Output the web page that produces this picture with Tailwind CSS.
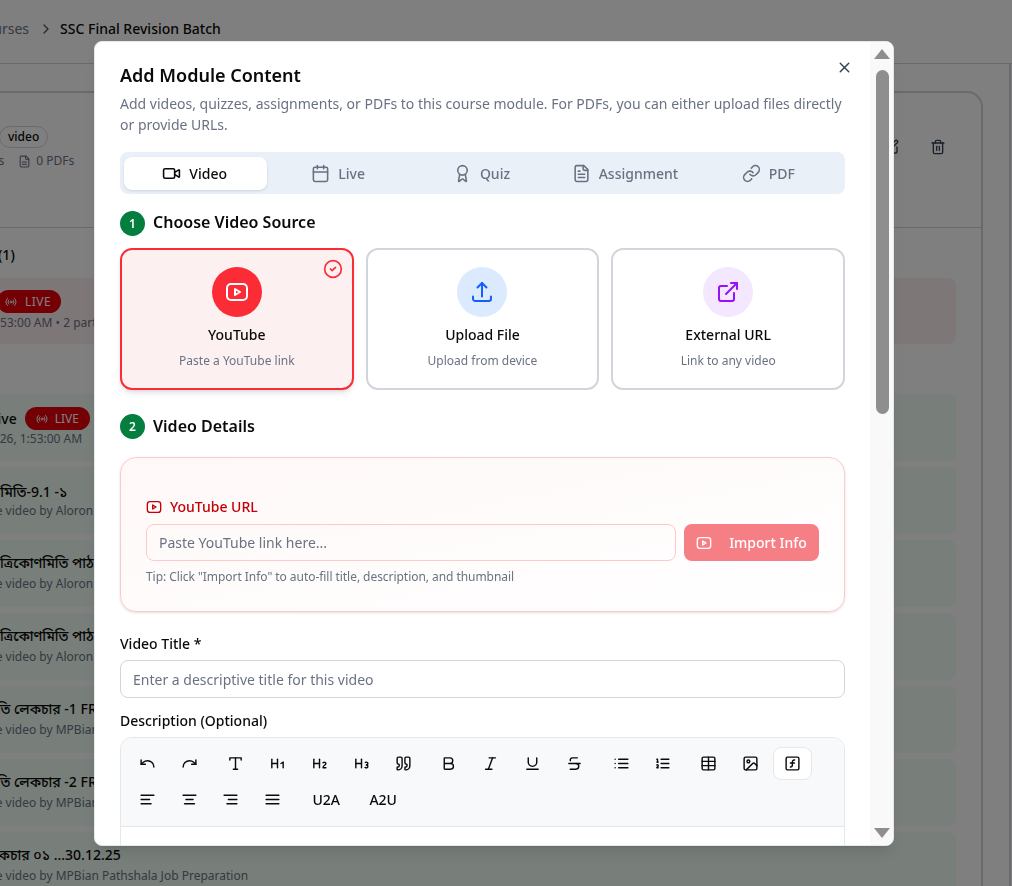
<!DOCTYPE html>
<html lang="en">
<head>
  <meta charset="UTF-8" />
  <title>Add Module Content</title>
  <script src="https://cdn.jsdelivr.net/npm/@tailwindcss/browser@4"></script>
</head>
<body class="font-['Noto_Sans','Noto_Sans_Bengali',sans-serif] bg-white text-[#0a0a0a] overflow-hidden">
  <!-- page behind the dialog -->
  <div class="w-[1012px] h-[886px] overflow-hidden">
    <div class="h-[64px] border-b border-gray-300 flex items-center -ml-[24px] pb-[6px] text-sm">
      <span class="text-gray-500">Courses</span>
      <svg class="w-4 h-4 ml-[9px] mr-[6px] text-gray-600" viewBox="0 0 24 24" fill="none" stroke="currentColor" stroke-width="2" stroke-linecap="round" stroke-linejoin="round"><path d="m9 18 6-6-6-6"/></svg>
      <span class="font-medium">SSC Final Revision Batch</span>
    </div>
    <div class="w-[1011px] border-r-2 border-gray-300 h-[822px] pt-[27px] overflow-hidden">
      <div class="-ml-[40px] w-[1023px] border-2 border-gray-300 rounded-2xl h-[900px]">
        <div class="h-[135px] border-b border-gray-300 pt-[33px] relative">
          <span class="flex w-fit items-center h-[22px] ml-[37px] border border-gray-300 rounded-full px-[8px] text-xs font-medium">video</span>
          <div class="flex items-center mt-[5px] -ml-[4px] text-xs text-gray-500 whitespace-nowrap">
            <span>2 videos</span>
            <svg class="w-[13px] h-[13px] ml-[14px] mr-[5px]" viewBox="0 0 24 24" fill="none" stroke="currentColor" stroke-width="2" stroke-linecap="round" stroke-linejoin="round"><path d="M15 2H6a2 2 0 0 0-2 2v16a2 2 0 0 0 2 2h12a2 2 0 0 0 2-2V7Z"/><path d="M14 2v4a2 2 0 0 0 2 2h4"/><path d="M16 13H8"/><path d="M16 17H8"/></svg>
            <span>0 PDFs</span>
          </div>
          <svg class="absolute left-[921px] top-[46px] w-4 h-4 text-gray-700" viewBox="0 0 24 24" fill="none" stroke="currentColor" stroke-width="2" stroke-linecap="round" stroke-linejoin="round"><path d="M12 3H5a2 2 0 0 0-2 2v14a2 2 0 0 0 2 2h14a2 2 0 0 0 2-2v-7"/><path d="M18.375 2.625a1 1 0 0 1 3 3l-9.013 9.014a2 2 0 0 1-.853.505l-2.873.84a.5.5 0 0 1-.62-.62l.84-2.873a2 2 0 0 1 .506-.852z"/></svg>
          <svg class="absolute left-[968px] top-[46px] w-4 h-4 text-gray-700" viewBox="0 0 24 24" fill="none" stroke="currentColor" stroke-width="2" stroke-linecap="round" stroke-linejoin="round"><path d="M3 6h18"/><path d="M19 6v14a2 2 0 0 1-2 2H7a2 2 0 0 1-2-2V6"/><path d="M8 6V4a2 2 0 0 1 2-2h4a2 2 0 0 1 2 2v2"/><path d="M10 11v6"/><path d="M14 11v6"/></svg>
        </div>
        <div class="pl-[10px] pr-[25px] pt-[17px] whitespace-nowrap">
          <p class="text-sm font-medium h-[33px] ml-[26px]">(1)</p>
          <div class="h-[66px] bg-[#fdeeee] rounded-lg pt-[12px] pl-[28px] text-xs text-gray-500">
            <span class="inline-flex items-center gap-[8px] bg-[#e7000b] text-white rounded-full h-[23px] pl-[8px] pr-[10px] -ml-[3px]">
              <svg class="w-3 h-3" viewBox="0 0 24 24" fill="none" stroke="currentColor" stroke-width="2" stroke-linecap="round" stroke-linejoin="round"><path d="M4.900 19.100C1 15.200 1 8.800 4.900 4.900"/><path d="M7.800 16.200c-2.300-2.300-2.300-6.100 0-8.500"/><circle cx="12" cy="12" r="2"/><path d="M16.200 7.800c2.300 2.300 2.300 6.100 0 8.500"/><path d="M19.100 4.900C23 8.800 23 15.100 19.100 19"/></svg>
              <span class="tracking-[0.5px]">LIVE</span>
            </span>
            <p class="mt-[2px] -ml-[10px]">1:53:00 AM • 2 parts</p>
          </div>
          <div class="mt-[50px] flex flex-col gap-[6px]">
            <div class="h-[67px] bg-[#f0fdf4] rounded-lg pt-[13px] pl-[28px] overflow-hidden">
              <div class="flex items-center gap-2 -ml-[10px]">
                <span class="text-sm font-medium">Live</span>
                <span class="inline-flex items-center gap-[7px] bg-[#e7000b] text-white text-xs rounded-full h-[23px] px-[11px]">
                  <svg class="w-3 h-3" viewBox="0 0 24 24" fill="none" stroke="currentColor" stroke-width="2" stroke-linecap="round" stroke-linejoin="round"><path d="M4.900 19.100C1 15.200 1 8.800 4.900 4.900"/><path d="M7.800 16.200c-2.300-2.300-2.300-6.100 0-8.500"/><circle cx="12" cy="12" r="2"/><path d="M16.200 7.800c2.300 2.300 2.300 6.100 0 8.500"/><path d="M19.100 4.900C23 8.800 23 15.100 19.100 19"/></svg>
                  LIVE
                </span>
              </div>
              <p class="text-xs text-gray-500 mt-[1px] -ml-[23px]">1/1/26, 1:53:00 AM</p>
            </div>
            <div class="h-[67px] bg-[#f0fdf4] rounded-lg pt-[15px] pl-[28px]">
              <p class="text-sm font-medium -ml-[42px]">ত্রিকোণমিতি-9.1 -১</p>
              <p class="text-xs text-gray-500 mt-[1px] -ml-[46px]">YouTube video by Aloron Pathshala</p>
            </div>
            <div class="h-[67px] bg-[#f0fdf4] rounded-lg pt-[13px] pl-[28px]">
              <p class="text-sm font-medium">ত্রিকোণমিতি পাঠ ০২ নবম দশম শ্রেণি</p>
              <p class="text-xs text-gray-500 mt-[3px] -ml-[46px]">YouTube video by Aloron Pathshala</p>
            </div>
            <div class="h-[67px] bg-[#f0fdf4] rounded-lg pt-[13px] pl-[28px]">
              <p class="text-sm font-medium">ত্রিকোণমিতি পাঠ ০৩ নবম দশম শ্রেণি</p>
              <p class="text-xs text-gray-500 mt-[3px] -ml-[46px]">YouTube video by Aloron Pathshala</p>
            </div>
            <div class="h-[67px] bg-[#f0fdf4] rounded-lg pt-[13px] pl-[28px]">
              <p class="text-sm font-medium -ml-[58px]">ত্রিকোণমিতি লেকচার -1 FREE Class</p>
              <p class="text-xs text-gray-500 mt-[3px] -ml-[46px]">YouTube video by MPBian Pathshala Job Preparation</p>
            </div>
            <div class="h-[67px] bg-[#f0fdf4] rounded-lg pt-[13px] pl-[28px]">
              <p class="text-sm font-medium -ml-[58px]">ত্রিকোণমিতি লেকচার -2 FREE Class</p>
              <p class="text-xs text-gray-500 mt-[3px] -ml-[46px]">YouTube video by MPBian Pathshala Job Preparation</p>
            </div>
            <div class="h-[67px] bg-[#f0fdf4] rounded-lg pt-[13px] pl-[28px]">
              <p class="text-sm font-medium -ml-[17px]">লেকচার ০১ ...30.12.25</p>
              <p class="text-xs text-gray-500 mt-[3px] -ml-[46px]">YouTube video by MPBian Pathshala Job Preparation</p>
            </div>
          </div>
        </div>
      </div>
    </div>
  </div>

  <!-- overlay and dialog -->
  <div class="fixed inset-0 bg-black/50">
    <div class="absolute left-[94px] top-[41px] w-[800px] h-[805px] bg-white rounded-lg border border-gray-200 shadow-lg overflow-hidden flex">
      <div class="w-[775px] shrink-0 pl-[25px] pr-[25px] pt-[22px] relative">
        <button class="absolute right-[17px] top-[17px] text-gray-700">
          <svg class="w-[17px] h-[17px]" viewBox="0 0 24 24" fill="none" stroke="currentColor" stroke-width="2" stroke-linecap="round" stroke-linejoin="round"><path d="M18 6 6 18"/><path d="m6 6 12 12"/></svg>
        </button>
        <h2 class="text-lg font-semibold leading-[22px]">Add Module Content</h2>
        <p class="text-sm leading-[21px] text-gray-500 mt-[7px]">Add videos, quizzes, assignments, or PDFs to this course module. For PDFs, you can either upload files directly or provide URLs.</p>

        <div class="mt-[17px] h-[42px] rounded-lg bg-[#e9f0f8] px-[4px] pt-[5px] pb-[4px] grid grid-cols-5 text-sm font-medium text-gray-500">
          <div class="flex items-center justify-center gap-[8px] pr-[2px] bg-white rounded-lg shadow-sm text-[#0a0a0a]">
            <svg class="w-[19px] h-[19px]" viewBox="0 0 24 24" fill="none" stroke="currentColor" stroke-width="2" stroke-linecap="round" stroke-linejoin="round"><path d="m16 13 5.223 3.482a.5.5 0 0 0 .777-.416V7.870a.5.5 0 0 0-.752-.432L16 10.500"/><rect x="2" y="6" width="14" height="12" rx="2"/></svg>
            Video
          </div>
          <div class="flex items-center justify-center gap-[8px] pr-[2px]">
            <svg class="w-[19px] h-[19px]" viewBox="0 0 24 24" fill="none" stroke="currentColor" stroke-width="2" stroke-linecap="round" stroke-linejoin="round"><path d="M8 2v4"/><path d="M16 2v4"/><rect width="18" height="18" x="3" y="4" rx="2"/><path d="M3 10h18"/></svg>
            Live
          </div>
          <div class="flex items-center justify-center gap-[8px] pr-[2px]">
            <svg class="w-[19px] h-[19px]" viewBox="0 0 24 24" fill="none" stroke="currentColor" stroke-width="2" stroke-linecap="round" stroke-linejoin="round"><path d="m15.477 12.890 1.515 8.526a.5.5 0 0 1-.81.47l-3.58-2.687a1 1 0 0 0-1.197 0l-3.586 2.686a.5.5 0 0 1-.81-.469l1.514-8.526"/><circle cx="12" cy="8" r="6"/></svg>
            Quiz
          </div>
          <div class="flex items-center justify-center gap-[8px] pr-[2px]">
            <svg class="w-[19px] h-[19px]" viewBox="0 0 24 24" fill="none" stroke="currentColor" stroke-width="2" stroke-linecap="round" stroke-linejoin="round"><path d="M15 2H6a2 2 0 0 0-2 2v16a2 2 0 0 0 2 2h12a2 2 0 0 0 2-2V7Z"/><path d="M14 2v4a2 2 0 0 0 2 2h4"/><path d="M10 9H8"/><path d="M16 13H8"/><path d="M16 17H8"/></svg>
            Assignment
          </div>
          <div class="flex items-center justify-center gap-[8px] pr-[2px]">
            <svg class="w-[19px] h-[19px]" viewBox="0 0 24 24" fill="none" stroke="currentColor" stroke-width="2" stroke-linecap="round" stroke-linejoin="round"><path d="M10 13a5 5 0 0 0 7.540.54l3-3a5 5 0 0 0-7.070-7.070l-1.720 1.710"/><path d="M14 11a5 5 0 0 0-7.540-.54l-3 3a5 5 0 0 0 7.070 7.070l1.710-1.710"/></svg>
            PDF
          </div>
        </div>

        <div class="flex items-center gap-2 h-[25px] mt-[17px]">
          <span class="w-[25px] h-[25px] rounded-full bg-[#047e3f] text-white text-xs font-semibold flex items-center justify-center">1</span>
          <h3 class="text-base font-semibold pb-[4px]">Choose Video Source</h3>
        </div>

        <div class="grid grid-cols-3 gap-3 mt-[12px]">
          <div class="relative h-[142px] rounded-xl border-2 border-[#fb2c36] bg-[#fdf0f1] shadow-md flex flex-col items-center pt-[17px]">
            <svg class="absolute right-[9px] top-[9px] w-[20px] h-[20px] text-[#fb2c36]" viewBox="0 0 24 24" fill="none" stroke="currentColor" stroke-width="2" stroke-linecap="round" stroke-linejoin="round"><circle cx="12" cy="12" r="10"/><path d="m9 12 2 2 4-4"/></svg>
            <span class="w-[50px] h-[50px] rounded-full bg-[#fb2c36] flex items-center justify-center text-white">
              <svg class="w-6 h-6" viewBox="0 0 24 24" fill="none" stroke="currentColor" stroke-width="2" stroke-linecap="round" stroke-linejoin="round"><path d="M2 8a4 4 0 0 1 4-4h12a4 4 0 0 1 4 4v8a4 4 0 0 1-4 4H6a4 4 0 0 1-4-4z"/><path d="m10 9 5 3-5 3z"/></svg>
            </span>
            <p class="text-sm font-medium mt-[8px]">YouTube</p>
            <p class="text-xs text-gray-500 mt-[8px]">Paste a YouTube link</p>
          </div>
          <div class="h-[142px] rounded-xl border-2 border-gray-300 flex flex-col items-center pt-[17px]">
            <span class="w-[50px] h-[50px] rounded-full bg-[#dbeafe] flex items-center justify-center text-[#155dfc]">
              <svg class="w-6 h-6" viewBox="0 0 24 24" fill="none" stroke="currentColor" stroke-width="2" stroke-linecap="round" stroke-linejoin="round"><path d="M3 16.500v2.250A2.250 2.250 0 0 0 5.250 21h13.500A2.250 2.250 0 0 0 21 18.750V16.500"/><path d="M7.500 7.500 12 3l4.500 4.500"/><path d="M12 3v13.500"/></svg>
            </span>
            <p class="text-sm font-medium mt-[8px]">Upload File</p>
            <p class="text-xs text-gray-500 mt-[8px]">Upload from device</p>
          </div>
          <div class="h-[142px] rounded-xl border-2 border-gray-300 flex flex-col items-center pt-[17px]">
            <span class="w-[50px] h-[50px] rounded-full bg-[#f3e8ff] flex items-center justify-center text-[#9810fa]">
              <svg class="w-6 h-6" viewBox="0 0 24 24" fill="none" stroke="currentColor" stroke-width="2" stroke-linecap="round" stroke-linejoin="round"><path d="M15 3h6v6"/><path d="M10 14 21 3"/><path d="M18 13v6a2 2 0 0 1-2 2H5a2 2 0 0 1-2-2V8a2 2 0 0 1 2-2h6"/></svg>
            </span>
            <p class="text-sm font-medium mt-[8px]">External URL</p>
            <p class="text-xs text-gray-500 mt-[8px]">Link to any video</p>
          </div>
        </div>

        <div class="flex items-center gap-2 h-[25px] mt-[24px]">
          <span class="w-[25px] h-[25px] rounded-full bg-[#047e3f] text-white text-xs font-semibold flex items-center justify-center">2</span>
          <h3 class="text-base font-semibold pb-[2px]">Video Details</h3>
        </div>

        <div class="mt-[18px] h-[155px] rounded-2xl border border-[#ffc9c9] bg-gradient-to-br from-[#fff8f8] to-white shadow-sm px-[25px] pt-[39px]">
          <div class="flex items-center gap-[8px] text-sm font-medium text-[#c10007]">
            <svg class="w-4 h-4" viewBox="0 0 24 24" fill="none" stroke="currentColor" stroke-width="2" stroke-linecap="round" stroke-linejoin="round"><path d="M2 8a4 4 0 0 1 4-4h12a4 4 0 0 1 4 4v8a4 4 0 0 1-4 4H6a4 4 0 0 1-4-4z"/><path d="m10 9 5 3-5 3z"/></svg>
            YouTube URL
          </div>
          <div class="flex gap-2 mt-[7px]">
            <input class="flex-1 h-[37px] rounded-lg border border-[#ffc9c9] bg-transparent px-3 text-sm placeholder:text-gray-500" placeholder="Paste YouTube link here..." />
            <button class="w-[135px] h-[37px] rounded-lg bg-[#f67f85] text-white text-sm font-medium flex items-center justify-center gap-[17px]">
              <svg class="w-4 h-4" viewBox="0 0 24 24" fill="none" stroke="currentColor" stroke-width="2" stroke-linecap="round" stroke-linejoin="round"><path d="M2 8a4 4 0 0 1 4-4h12a4 4 0 0 1 4 4v8a4 4 0 0 1-4 4H6a4 4 0 0 1-4-4z"/><path d="m10 9 5 3-5 3z"/></svg>
              Import Info
            </button>
          </div>
          <p class="text-xs tracking-[-0.05px] text-gray-500 mt-[8px]">Tip: Click "Import Info" to auto-fill title, description, and thumbnail</p>
        </div>

        <label class="block text-sm font-medium mt-[22px]">Video Title *</label>
        <input class="block w-full h-[38px] mt-[6px] rounded-lg border border-gray-300 px-3 text-sm placeholder:text-gray-500" placeholder="Enter a descriptive title for this video" />
        <label class="block text-sm font-medium mt-[13px]">Description (Optional)</label>

        <div class="mt-[6px] rounded-xl border border-gray-200 h-[200px]">
          <div class="h-[89px] bg-[#f8f9fb] rounded-t-xl border-b border-gray-200 pl-[7px] pt-[9px]">
            <div class="flex items-center gap-[3px] h-[33px]">
              <button class="w-[38.800px] h-[33px] flex items-center justify-center"><svg class="w-[17px] h-[17px]" viewBox="0 0 24 24" fill="none" stroke="currentColor" stroke-width="2" stroke-linecap="round" stroke-linejoin="round"><path d="M3 7v6h6"/><path d="M21 17a9 9 0 0 0-9-9 9 9 0 0 0-6 2.300L3 13"/></svg></button>
              <button class="w-[38.800px] h-[33px] flex items-center justify-center"><svg class="w-[17px] h-[17px]" viewBox="0 0 24 24" fill="none" stroke="currentColor" stroke-width="2" stroke-linecap="round" stroke-linejoin="round"><path d="M21 7v6h-6"/><path d="M3 17a9 9 0 0 1 9-9 9 9 0 0 1 6 2.300l3 2.700"/></svg></button>
              <button class="w-[38.800px] h-[33px] ml-[5px] flex items-center justify-center"><svg class="w-[17px] h-[17px]" viewBox="0 0 24 24" fill="none" stroke="currentColor" stroke-width="2" stroke-linecap="round" stroke-linejoin="round"><path d="M4 7V4h16v3"/><path d="M9 20h6"/><path d="M12 4v16"/></svg></button>
              <button class="w-[38.800px] h-[33px] flex items-center justify-center"><svg class="w-[17px] h-[17px]" viewBox="0 0 24 24" fill="none" stroke="currentColor" stroke-width="2" stroke-linecap="round" stroke-linejoin="round"><path d="M4 12h8"/><path d="M4 18V6"/><path d="M12 18V6"/><path d="m17 12 3-2v8"/></svg></button>
              <button class="w-[38.800px] h-[33px] flex items-center justify-center"><svg class="w-[17px] h-[17px]" viewBox="0 0 24 24" fill="none" stroke="currentColor" stroke-width="2" stroke-linecap="round" stroke-linejoin="round"><path d="M4 12h8"/><path d="M4 18V6"/><path d="M12 18V6"/><path d="M21 18h-4c0-4 4-3 4-6 0-1.500-2-2.500-4-1"/></svg></button>
              <button class="w-[38.800px] h-[33px] flex items-center justify-center"><svg class="w-[17px] h-[17px]" viewBox="0 0 24 24" fill="none" stroke="currentColor" stroke-width="2" stroke-linecap="round" stroke-linejoin="round"><path d="M4 12h8"/><path d="M4 18V6"/><path d="M12 18V6"/><path d="M17.500 10.500c1.700-1 3.500 0 3.500 1.500a2 2 0 0 1-2 2"/><path d="M17 17.500c2 1.500 4 .3 4-1.500a2 2 0 0 0-2-2"/></svg></button>
              <button class="w-[38.800px] h-[33px] flex items-center justify-center"><svg class="w-[17px] h-[17px]" viewBox="0 0 24 24" fill="none" stroke="currentColor" stroke-width="2" stroke-linecap="round" stroke-linejoin="round"><path d="M16 3a2 2 0 0 0-2 2v6a2 2 0 0 0 2 2 1 1 0 0 1 1 1v1a2 2 0 0 1-2 2 1 1 0 0 0-1 1v2a1 1 0 0 0 1 1 6 6 0 0 0 6-6V5a2 2 0 0 0-2-2z"/><path d="M5 3a2 2 0 0 0-2 2v6a2 2 0 0 0 2 2 1 1 0 0 1 1 1v1a2 2 0 0 1-2 2 1 1 0 0 0-1 1v2a1 1 0 0 0 1 1 6 6 0 0 0 6-6V5a2 2 0 0 0-2-2z"/></svg></button>
              <button class="w-[38.800px] h-[33px] ml-[4px] flex items-center justify-center"><svg class="w-[17px] h-[17px]" viewBox="0 0 24 24" fill="none" stroke="currentColor" stroke-width="2" stroke-linecap="round" stroke-linejoin="round"><path d="M6 12h9a4 4 0 0 1 0 8H7a1 1 0 0 1-1-1V5a1 1 0 0 1 1-1h7a4 4 0 0 1 0 8"/></svg></button>
              <button class="w-[38.800px] h-[33px] flex items-center justify-center"><svg class="w-[17px] h-[17px]" viewBox="0 0 24 24" fill="none" stroke="currentColor" stroke-width="2" stroke-linecap="round" stroke-linejoin="round"><path d="M19 4h-9"/><path d="M14 20H5"/><path d="M15 4 9 20"/></svg></button>
              <button class="w-[38.800px] h-[33px] flex items-center justify-center"><svg class="w-[17px] h-[17px]" viewBox="0 0 24 24" fill="none" stroke="currentColor" stroke-width="2" stroke-linecap="round" stroke-linejoin="round"><path d="M6 4v6a6 6 0 0 0 12 0V4"/><path d="M4 20h16"/></svg></button>
              <button class="w-[38.800px] h-[33px] flex items-center justify-center"><svg class="w-[17px] h-[17px]" viewBox="0 0 24 24" fill="none" stroke="currentColor" stroke-width="2" stroke-linecap="round" stroke-linejoin="round"><path d="M16 4H9a3 3 0 0 0-2.830 4"/><path d="M14 12a4 4 0 0 1 0 8H6"/><path d="M4 12h16"/></svg></button>
              <button class="w-[38.800px] h-[33px] ml-[5px] flex items-center justify-center"><svg class="w-[17px] h-[17px]" viewBox="0 0 24 24" fill="none" stroke="currentColor" stroke-width="2" stroke-linecap="round" stroke-linejoin="round"><path d="M3 12h.01"/><path d="M3 18h.01"/><path d="M3 6h.01"/><path d="M8 12h13"/><path d="M8 18h13"/><path d="M8 6h13"/></svg></button>
              <button class="w-[38.800px] h-[33px] flex items-center justify-center"><svg class="w-[17px] h-[17px]" viewBox="0 0 24 24" fill="none" stroke="currentColor" stroke-width="2" stroke-linecap="round" stroke-linejoin="round"><path d="M10 12h11"/><path d="M10 18h11"/><path d="M10 6h11"/><path d="M4 10h2"/><path d="M4 6h1v4"/><path d="M6 18H4c0-1 2-2 2-3s-1-1.500-2-1"/></svg></button>
              <button class="w-[38.800px] h-[33px] ml-[4px] flex items-center justify-center"><svg class="w-[17px] h-[17px]" viewBox="0 0 24 24" fill="none" stroke="currentColor" stroke-width="2" stroke-linecap="round" stroke-linejoin="round"><path d="M12 3v18"/><rect width="18" height="18" x="3" y="3" rx="2"/><path d="M3 9h18"/><path d="M3 15h18"/></svg></button>
              <button class="w-[38.800px] h-[33px] flex items-center justify-center"><svg class="w-[17px] h-[17px]" viewBox="0 0 24 24" fill="none" stroke="currentColor" stroke-width="2" stroke-linecap="round" stroke-linejoin="round"><rect width="18" height="18" x="3" y="3" rx="2"/><circle cx="9" cy="9" r="2"/><path d="m21 15-3.086-3.086a2 2 0 0 0-2.828 0L6 21"/></svg></button>
              <button class="w-[38.800px] h-[33px] flex items-center justify-center bg-white border border-gray-200 rounded-lg"><svg class="w-[17px] h-[17px]" viewBox="0 0 24 24" fill="none" stroke="currentColor" stroke-width="2" stroke-linecap="round" stroke-linejoin="round"><rect width="18" height="18" x="3" y="3" rx="2"/><path d="M9 17c2 0 2.800-1 2.800-2.800V10c0-2 1-3.300 3.200-3"/><path d="M9 11.200h5.700"/></svg></button>
            </div>
            <div class="flex items-center gap-[3px] h-[33px] mt-[3px] text-sm font-medium">
              <button class="w-[38.800px] h-[33px] flex items-center justify-center"><svg class="w-[17px] h-[17px]" viewBox="0 0 24 24" fill="none" stroke="currentColor" stroke-width="2" stroke-linecap="round" stroke-linejoin="round"><path d="M15 12H3"/><path d="M17 18H3"/><path d="M21 6H3"/></svg></button>
              <button class="w-[38.800px] h-[33px] flex items-center justify-center"><svg class="w-[17px] h-[17px]" viewBox="0 0 24 24" fill="none" stroke="currentColor" stroke-width="2" stroke-linecap="round" stroke-linejoin="round"><path d="M17 12H7"/><path d="M19 18H5"/><path d="M21 6H3"/></svg></button>
              <button class="w-[38.800px] h-[33px] flex items-center justify-center"><svg class="w-[17px] h-[17px]" viewBox="0 0 24 24" fill="none" stroke="currentColor" stroke-width="2" stroke-linecap="round" stroke-linejoin="round"><path d="M21 12H9"/><path d="M21 18H7"/><path d="M21 6H3"/></svg></button>
              <button class="w-[38.800px] h-[33px] flex items-center justify-center"><svg class="w-[17px] h-[17px]" viewBox="0 0 24 24" fill="none" stroke="currentColor" stroke-width="2" stroke-linecap="round" stroke-linejoin="round"><path d="M3 12h18"/><path d="M3 18h18"/><path d="M3 6h18"/></svg></button>
              <button class="w-[54px] h-[33px] ml-[4px]">U2A</button>
              <button class="w-[54px] h-[33px]">A2U</button>
            </div>
          </div>
        </div>
      </div>
      <!-- scrollbar -->
      <div class="w-[24px] shrink-0 bg-[#f9f9f9] flex flex-col items-center pt-[7px]">
        <svg class="w-[16px] h-[10px] text-[#8e8e8e] shrink-0" viewBox="0 0 16 10" fill="currentColor"><path d="M8 0l8 10H0z"/></svg>
        <div class="w-[13px] h-[344px] mt-[11px] rounded-full bg-[#8e8e8e] shrink-0"></div>
        <svg class="w-[16px] h-[10px] text-[#8e8e8e] shrink-0 mt-[414px]" viewBox="0 0 16 10" fill="currentColor"><path d="M8 10L16 0H0z"/></svg>
      </div>
    </div>
  </div>
</body>
</html>
